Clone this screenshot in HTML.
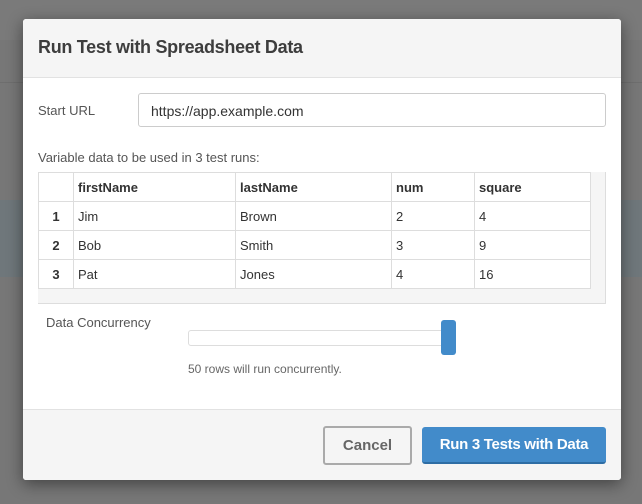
<!DOCTYPE html>
<html><head><style>
body{margin:0;width:642px;height:504px;background:#777;font-family:"Liberation Sans",sans-serif;position:relative;overflow:hidden}
.bg1{position:absolute;left:0;top:0;width:642px;height:40px;background:#7a7a7a}
.bgl{position:absolute;left:0;top:82px;width:642px;height:1px;background:#6e6e6e}
.bg2{position:absolute;left:0;top:200px;width:642px;height:77px;background:#6f777b}
.m{position:absolute;left:23px;top:19px;width:598px;height:461px;background:#fff;border-radius:3px;box-shadow:0 4px 16px rgba(0,0,0,.45);overflow:hidden}
.h{height:58px;background:#f5f5f5;border-bottom:1px solid #e2e2e2}
.h div{position:absolute;left:15px;top:18px;font-size:18px;font-weight:bold;color:#3d3d3d;letter-spacing:-0.3px}
.a{position:absolute;color:#555;font-size:13px}
.in{position:absolute;left:115px;top:74px;width:468px;height:34px;border:1px solid #ccc;border-radius:3px;font-size:14px;color:#333;box-sizing:border-box;padding:9px 12px}
.tw{position:absolute;left:15px;top:153px;width:567px;height:131px;background:#f5f5f5;border-bottom:1px solid #ddd;border-right:1px solid #ddd}
table{border-collapse:collapse;font-size:13px;color:#333;background:#fff}
td{border:1px solid #ddd;height:29px;padding:0 4px;box-sizing:border-box}
tr:first-child td{font-weight:bold}
td.n{text-align:center;font-weight:bold;width:35px}
.tr{position:absolute;left:165px;top:311px;width:262px;height:16px;border:1px solid #ddd;border-radius:3px;box-sizing:border-box}
.hd{position:absolute;left:418px;top:301px;width:15px;height:35px;background:#428bca;border-radius:3px}
.f{position:absolute;left:0;top:390px;width:598px;height:71px;background:#f5f5f5;border-top:1px solid #e2e2e2}
.b1{position:absolute;left:300px;top:16px;width:89px;height:39px;border:2px solid #aaa;border-radius:3px;box-sizing:border-box;background:#f5f5f5;color:#666;font-size:15px;font-weight:bold;text-align:center;line-height:35px}
.b2{position:absolute;left:399px;top:17px;width:184px;height:37px;background:#428bca;border-bottom:2px solid #2e6da4;border-radius:3px;box-sizing:border-box;color:#fff;font-size:15px;font-weight:bold;text-align:center;line-height:35px;letter-spacing:-0.3px}
</style></head><body>
<div class="bg1"></div><div class="bgl"></div><div class="bg2"></div>
<div class="m">
<div class="h"><div>Run Test with Spreadsheet Data</div></div>
<div class="a" style="left:15px;top:84px">Start URL</div>
<div class="in">https://app.example.com</div>
<div class="a" style="left:15px;top:131px">Variable data to be used in 3 test runs:</div>
<div class="tw"><table>
<tr><td class="n"></td><td style="width:162px">firstName</td><td style="width:156px">lastName</td><td style="width:83px">num</td><td style="width:116px">square</td></tr>
<tr><td class="n">1</td><td>Jim</td><td>Brown</td><td>2</td><td>4</td></tr>
<tr><td class="n">2</td><td>Bob</td><td>Smith</td><td>3</td><td>9</td></tr>
<tr><td class="n">3</td><td>Pat</td><td>Jones</td><td>4</td><td>16</td></tr>
</table></div>
<div class="a" style="left:23px;top:296px">Data Concurrency</div>
<div class="tr"></div><div class="hd"></div>
<div class="a" style="left:165px;top:343px;font-size:12px;color:#666">50 rows will run concurrently.</div>
<div class="f"><div class="b1">Cancel</div><div class="b2">Run 3 Tests with Data</div></div>
</div>
</body></html>
